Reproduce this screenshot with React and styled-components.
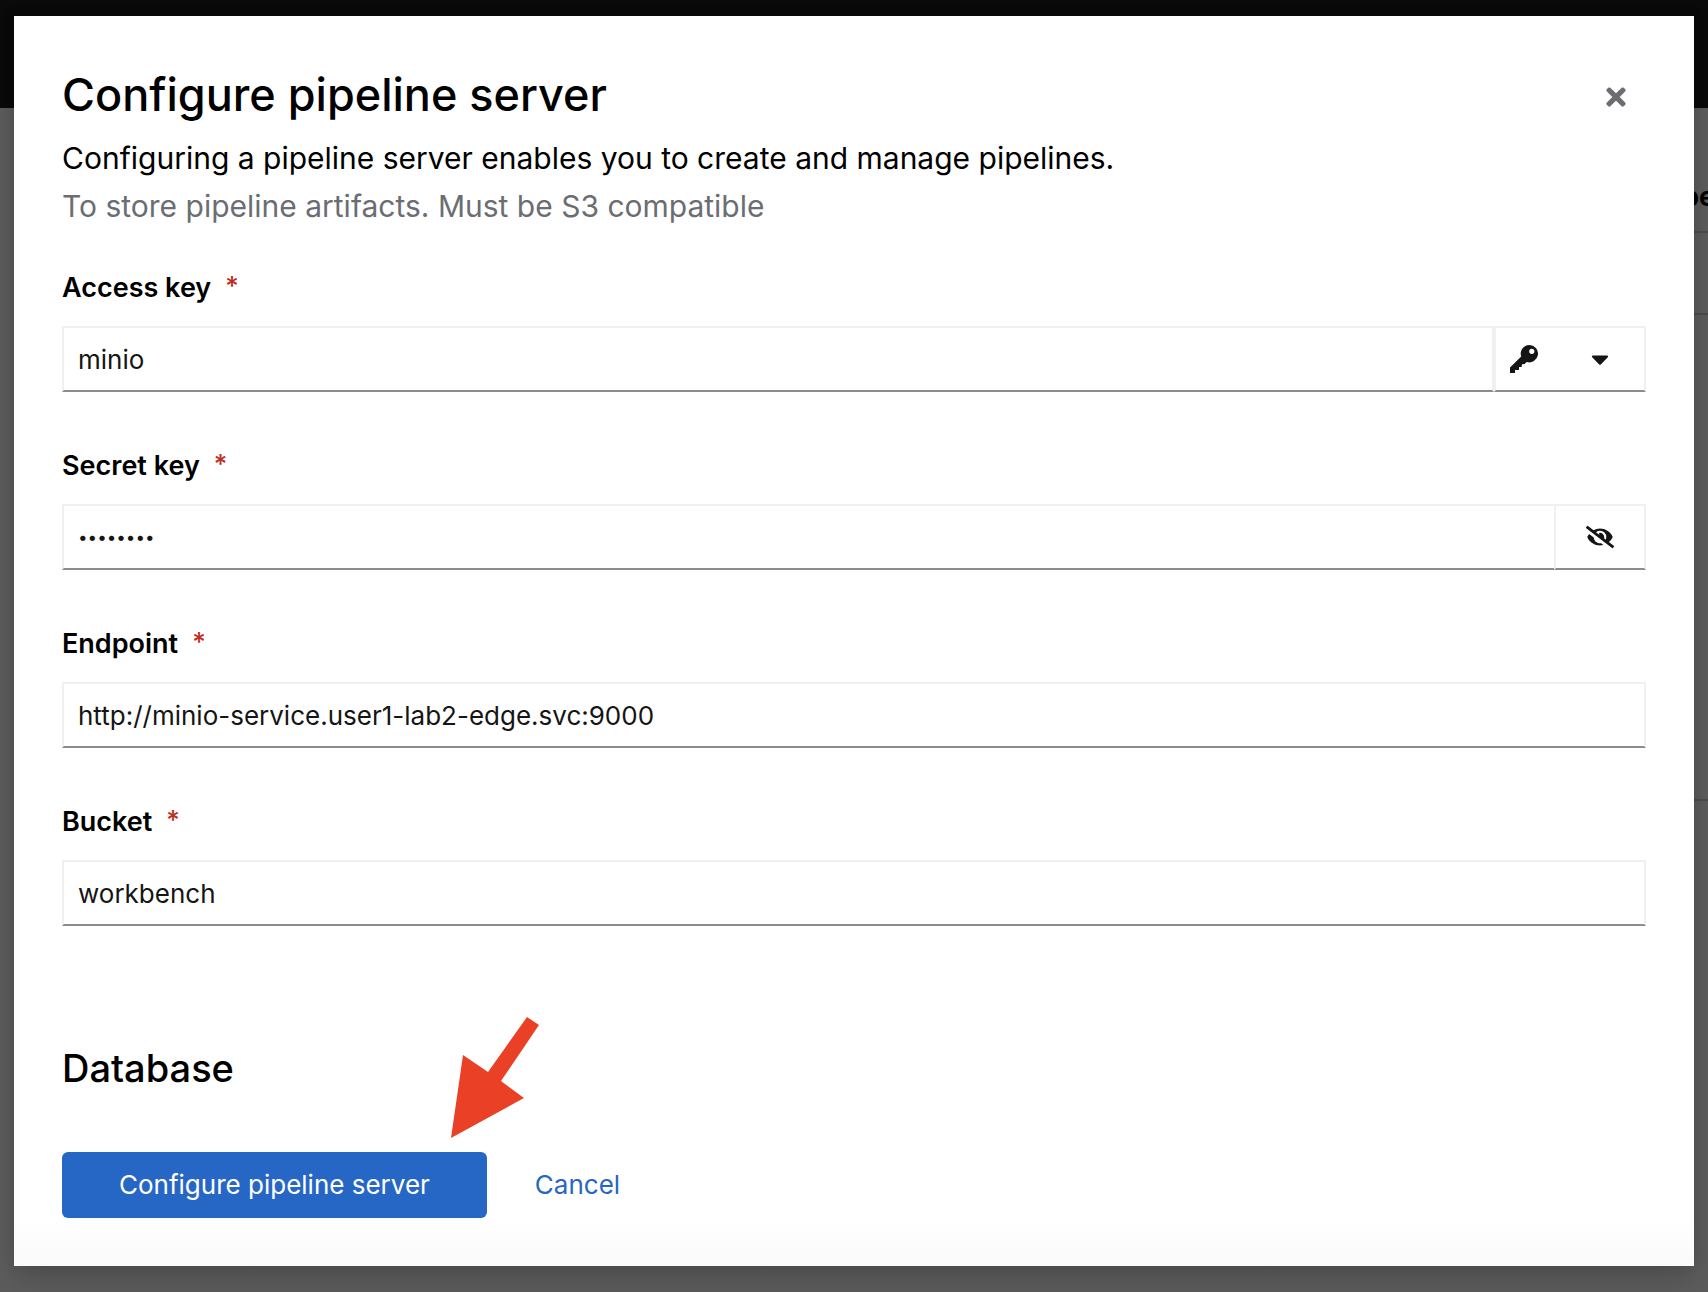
import React from "react";
import styled, { createGlobalStyle } from "styled-components";
import { FaTimes, FaCaretDown, FaEyeSlash } from "react-icons/fa";

const GlobalStyle = createGlobalStyle`
  *, *::before, *::after { box-sizing: border-box; }
  body {
    margin: 0;
    background: #5d5d5d;
    color: #000;
    font-family: Inter, "Liberation Sans", sans-serif;
    font-size: 27px;
    line-height: 36px;
  }
  h1, h2, p { margin: 0; }
  button, input { font: inherit; }
`;

const Screen = styled.div`
  position: relative;
  min-height: 100vh;
  display: flex;
  overflow: hidden;
`;

const Backdrop = styled.div`
  position: absolute;
  inset: 0;
`;

const Masthead = styled.div`
  height: 108px;
  background: #0a0a0a;
`;

const BackdropRow = styled.div`
  display: flex;
  align-items: flex-end;
  justify-content: flex-end;
  height: ${(p) => p.$height}px;
  margin-left: 32px;
  padding-bottom: 16px;
  border-bottom: 2px solid #4c4c4c;
  font-weight: 700;
`;

const ClippedText = styled.span`
  width: 26px;
  overflow: hidden;
`;

const Overlay = styled.div`
  position: relative;
  flex: 1;
  display: flex;
  padding: 16px 14px 26px;
`;

const Modal = styled.section`
  flex: 1;
  min-width: 0;
  display: flex;
  flex-direction: column;
  padding: 48px;
  background: linear-gradient(to top, #fafafa, #fff 48px);
  box-shadow: 0 16px 32px rgba(0, 0, 0, 0.16), 0 0 12px rgba(0, 0, 0, 0.1);
`;

const Header = styled.header`
  display: flex;
  align-items: flex-start;
  justify-content: space-between;
`;

const Title = styled.h1`
  font-size: 45px;
  font-weight: 500;
  line-height: 62px;
`;

const CloseButton = styled.button`
  display: flex;
  padding: 19px 16px;
  border: 0;
  background: none;
  color: #6a6e73;
  font-size: 28px;
`;

const Lead = styled.p`
  font-size: 30px;
  line-height: 48px;
  color: ${(p) => (p.$muted ? "#6a6e73" : "#000")};
`;

const Intro = styled.div`
  padding-top: 4px;
`;

const Form = styled.form`
  display: flex;
  flex-direction: column;
  gap: 56px;
  padding-top: 40px;
`;

const Field = styled.div`
  display: flex;
  flex-direction: column;
  gap: 20px;
`;

const Label = styled.label`
  display: flex;
  gap: 14px;
  font-size: 27px;
  font-weight: 600;
`;

const Required = styled.span`
  color: #c02c1c;
  font-size: 26px;
  font-weight: 500;
  line-height: 32px;
`;

const InputGroup = styled.div`
  display: flex;
`;

const TextInput = styled.input`
  flex: 1;
  min-width: 0;
  height: 66px;
  padding: 0 14px;
  border: 2px solid #f0f0f0;
  border-bottom-color: #8a8d90;
  border-radius: 0;
  background: transparent;
  color: #151515;
  font-size: ${(p) => (p.type === "password" ? 17 : 26)}px;
  outline: none;
`;

const GroupButton = styled.button`
  display: flex;
  align-items: center;
  justify-content: ${(p) => (p.$wide ? "space-between" : "center")};
  width: ${(p) => (p.$wide ? 152 : 92)}px;
  margin-left: ${(p) => (p.$wide ? 0 : -2)}px;
  padding: ${(p) => (p.$wide ? "0 30px 0 14px" : "0")};
  border: 2px solid #f0f0f0;
  border-bottom-color: #8a8d90;
  background: transparent;
  color: #151515;
  font-size: 28px;
`;

const KeySvg = styled.svg`
  width: 28px;
  height: 28px;
  fill: currentColor;
`;

const SectionTitle = styled.h2`
  padding-top: 118px;
  font-size: 38px;
  font-weight: 500;
  line-height: 48px;
`;

const Footer = styled.footer`
  position: relative;
  display: flex;
  gap: 16px;
  margin-top: auto;
`;

const ActionButton = styled.button`
  height: 66px;
  padding: 0 ${(p) => (p.$primary ? 57 : 32)}px;
  border: 0;
  border-radius: 6px;
  background: ${(p) => (p.$primary ? "#2667c6" : "transparent")};
  color: ${(p) => (p.$primary ? "#fff" : "#2667c6")};
  font-size: 26px;
`;

const Pointer = styled.svg`
  position: absolute;
  left: 389px;
  bottom: 80px;
  width: 88px;
  height: 121px;
  fill: #ea4126;
`;

function KeyIcon() {
  return (
    <KeySvg viewBox="0 0 28 28" aria-hidden="true">
      <path
        fillRule="evenodd"
        d="M19.3 0a8.7 8.7 0 1 1-2.6 17L15 18.6V19l-3 .3-.4 2.7H9v3H5v3H0v-5.5L11.2 11.6A8.7 8.7 0 0 1 19.3 0Zm2.5 3.7a2.6 2.6 0 1 0 0 5.2 2.6 2.6 0 0 0 0-5.2Z"
      />
    </KeySvg>
  );
}

function FormField({ id, label, type = "text", value, children }) {
  return (
    <Field>
      <Label htmlFor={id}>
        {label}
        <Required aria-hidden="true">*</Required>
      </Label>
      <InputGroup>
        <TextInput id={id} type={type} defaultValue={value} required />
        {children}
      </InputGroup>
    </Field>
  );
}

export default function App() {
  return (
    <Screen>
      <GlobalStyle />
      <Backdrop aria-hidden="true">
        <Masthead />
        <BackdropRow $height={125}>
          <ClippedText>pe</ClippedText>
        </BackdropRow>
        <BackdropRow $height={82} />
        <BackdropRow $height={486} />
      </Backdrop>
      <Overlay>
        <Modal role="dialog" aria-modal="true" aria-labelledby="modal-title">
          <Header>
            <Title id="modal-title">Configure pipeline server</Title>
            <CloseButton type="button" aria-label="Close">
              <FaTimes />
            </CloseButton>
          </Header>
          <Intro>
            <Lead>Configuring a pipeline server enables you to create and manage pipelines.</Lead>
            <Lead $muted>To store pipeline artifacts. Must be S3 compatible</Lead>
          </Intro>
          <Form>
            <FormField id="access-key" label="Access key" value="minio">
              <GroupButton $wide type="button" aria-label="Choose a key">
                <KeyIcon />
                <FaCaretDown />
              </GroupButton>
            </FormField>
            <FormField id="secret-key" label="Secret key" type="password" value="minio123">
              <GroupButton type="button" aria-label="Show secret key">
                <FaEyeSlash />
              </GroupButton>
            </FormField>
            <FormField id="endpoint" label="Endpoint" value="http://minio-service.user1-lab2-edge.svc:9000" />
            <FormField id="bucket" label="Bucket" value="workbench" />
          </Form>
          <SectionTitle>Database</SectionTitle>
          <Footer>
            <ActionButton $primary type="button">Configure pipeline server</ActionButton>
            <ActionButton type="button">Cancel</ActionButton>
            <Pointer viewBox="0 0 88 121" aria-hidden="true">
              <path d="M0 121 12 38 37 55 76 0 88 8 50 64 73 81Z" />
            </Pointer>
          </Footer>
        </Modal>
      </Overlay>
    </Screen>
  );
}
